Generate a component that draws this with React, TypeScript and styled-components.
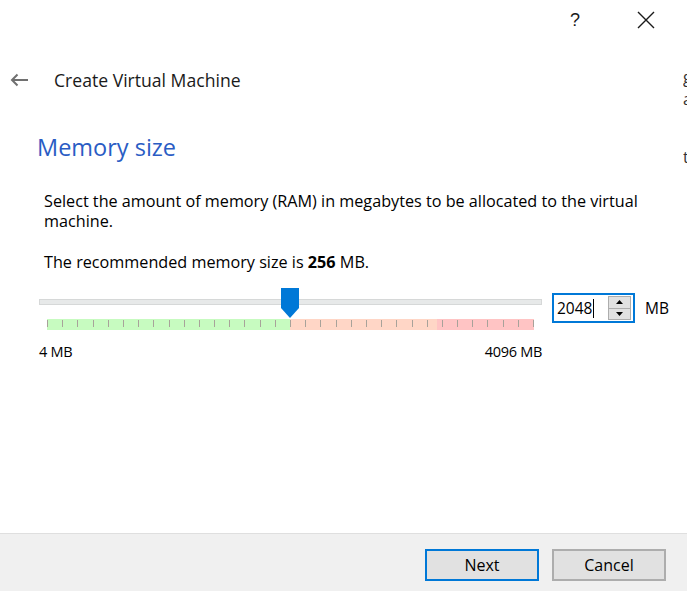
import React from "react";
import styled, { createGlobalStyle } from "styled-components";

const GlobalStyle = createGlobalStyle`
  html, body {
    margin: 0;
    padding: 0;
    background: #ffffff;
  }
  body {
    font-family: "Open Sans", "Noto Sans", "Liberation Sans", sans-serif;
    color: #000;
  }
`;

const TICKS = 33;
const MIN_MB = 4;
const MAX_MB = 4096;
const VALUE_MB = 2048;

function Dialog() {
  const pct = (VALUE_MB - MIN_MB) / (MAX_MB - MIN_MB);

  return (
    <Window>
      <TitleBar>
        <TitleButton>?</TitleButton>
        <TitleButton>
          <svg width="18" height="18" viewBox="0 0 18 18">
            <path d="M1 1 L17 17 M17 1 L1 17" stroke="#1a1a1a" strokeWidth="1.4" fill="none" />
          </svg>
        </TitleButton>
      </TitleBar>

      <Header>
        <BackArrow>
          <svg width="19" height="14" viewBox="0 0 19 14">
            <path d="M18 7 H2 M7.5 1.5 L2 7 L7.5 12.5" stroke="#707070" strokeWidth="2" fill="none" />
          </svg>
        </BackArrow>
        <HeaderTitle>Create Virtual Machine</HeaderTitle>
      </Header>

      <Content>
        <PageTitle>Memory size</PageTitle>
        <Body>
          <Paragraph>
            Select the amount of memory (RAM) in megabytes to be allocated to the virtual
            machine.
          </Paragraph>
          <Paragraph>
            The recommended memory size is <b>256</b> MB.
          </Paragraph>

          <SliderRow>
            <SliderColumn>
              <TrackArea>
                <Track />
                <Thumb style={{ left: `calc(${pct * 100}% - 9px)` }}>
                  <svg width="18" height="30" viewBox="0 0 18 30">
                    <polygon points="0,0 18,0 18,20 9,30 0,20" fill="#0078d7" />
                  </svg>
                </Thumb>
              </TrackArea>
              <TickBar>
                {Array.from({ length: TICKS }).map((_, i) => (
                  <Tick key={i} />
                ))}
              </TickBar>
              <Limits>
                <span>4 MB</span>
                <span>4096 MB</span>
              </Limits>
            </SliderColumn>

            <SpinBox>
              <SpinValue>
                2048<Caret />
              </SpinValue>
              <SpinButtons>
                <SpinButton>
                  <svg width="7" height="4" viewBox="0 0 7 4">
                    <polygon points="0,4 7,4 3.5,0" fill="#000" />
                  </svg>
                </SpinButton>
                <SpinButton>
                  <svg width="7" height="4" viewBox="0 0 7 4">
                    <polygon points="0,0 7,0 3.5,4" fill="#000" />
                  </svg>
                </SpinButton>
              </SpinButtons>
            </SpinBox>
            <Unit>MB</Unit>
          </SliderRow>
        </Body>
      </Content>

      <Footer>
        <Button $primary>Next</Button>
        <Button>Cancel</Button>
      </Footer>

      <Peek>
        <PeekChar $top={66}>g</PeekChar>
        <PeekChar $top={88}>a</PeekChar>
        <PeekChar $top={146}>t</PeekChar>
      </Peek>
    </Window>
  );
}

const Window = styled.div`
  position: relative;
  width: 687px;
  height: 591px;
  display: flex;
  flex-direction: column;
  background: #fff;
  overflow: hidden;
`;

const TitleBar = styled.div`
  height: 40px;
  display: flex;
  justify-content: flex-end;
  align-items: center;
  padding-right: 32px;
  gap: 53px;
`;

const TitleButton = styled.div`
  width: 18px;
  height: 18px;
  display: flex;
  align-items: center;
  justify-content: center;
  font-size: 18px;
  color: #1a1a1a;
  font-family: "Liberation Sans", sans-serif;
`;

const Header = styled.div`
  height: 40px;
  display: flex;
  align-items: center;
  padding-left: 10px;
  margin-top: 20px;
`;

const BackArrow = styled.div`
  width: 19px;
  display: flex;
  align-items: center;
`;

const HeaderTitle = styled.div`
  margin-left: 25px;
  font-size: 17.6px;
  color: #1a1a1a;
`;

const Content = styled.div`
  flex: 1;
  padding-left: 37px;
  padding-top: 32px;
`;

const PageTitle = styled.div`
  font-size: 23.5px;
  line-height: 30px;
  color: #2a5cc4;
`;

const Body = styled.div`
  padding-left: 7px;
  margin-top: 29px;
`;

const Paragraph = styled.p`
  margin: 0 0 21px 0;
  width: 625px;
  font-size: 16.2px;
  line-height: 20px;
  b {
    font-weight: 700;
  }
`;

const SliderRow = styled.div`
  display: flex;
  align-items: flex-start;
  margin-left: -5px;
  margin-top: -5px;
`;

const SliderColumn = styled.div`
  width: 503px;
  display: flex;
  flex-direction: column;
`;

const TrackArea = styled.div`
  position: relative;
  height: 30px;
  display: flex;
  align-items: flex-start;
`;

const Track = styled.div`
  margin-top: 11px;
  width: 100%;
  height: 6px;
  box-sizing: border-box;
  background: #e7e9e9;
  border: 1px solid #d6d8d8;
`;

const Thumb = styled.div`
  position: absolute;
  top: 0;
  width: 18px;
  height: 30px;
`;

const TickBar = styled.div`
  margin: 1px 8px 0;
  height: 11px;
  display: flex;
  justify-content: space-between;
  align-items: flex-start;
  background: linear-gradient(
    to right,
    #c7fbc0 0%,
    #c7fbc0 50%,
    #ffd6c6 50%,
    #ffd6c6 80%,
    #ffc4c4 80%,
    #ffc4c4 100%
  );
`;

const Tick = styled.span`
  width: 1px;
  height: 7px;
  margin-top: 1px;
  background: #a8a29a;
`;

const Limits = styled.div`
  display: flex;
  justify-content: space-between;
  margin-top: 13px;
  font-size: 14.5px;
  line-height: 18px;
  letter-spacing: -0.3px;
`;

const SpinBox = styled.div`
  margin-left: 10px;
  margin-top: 5px;
  width: 83px;
  height: 30px;
  box-sizing: border-box;
  border: 2px solid #0078d7;
  display: flex;
  align-items: center;
  padding: 0 2px 0 3px;
`;

const SpinValue = styled.div`
  flex: 1;
  display: flex;
  align-items: center;
  font-size: 15.5px;
`;

const Caret = styled.span`
  display: inline-block;
  width: 1px;
  height: 19px;
  background: #000;
  margin-left: 1px;
`;

const SpinButtons = styled.div`
  width: 23px;
  height: 24px;
  display: flex;
  flex-direction: column;
  border: 1px solid #adadad;
  box-sizing: border-box;
`;

const SpinButton = styled.div`
  flex: 1;
  display: flex;
  align-items: center;
  justify-content: center;
  background: #e1e1e1;
  & + & {
    border-top: 1px solid #adadad;
  }
`;

const Unit = styled.div`
  margin-left: 10px;
  margin-top: 10px;
  font-size: 15.5px;
  line-height: 20px;
`;

const Footer = styled.div`
  height: 58px;
  border-top: 1px solid #dfdfdf;
  background: #f0f0f0;
  display: flex;
  justify-content: flex-end;
  align-items: flex-start;
  gap: 13px;
  padding: 15px 21px 0 0;
  box-sizing: border-box;
`;

const Button = styled.button<{ $primary?: boolean }>`
  width: 114px;
  height: 32px;
  box-sizing: border-box;
  background: #e1e1e1;
  border: 2px solid ${(p) => (p.$primary ? "#0078d7" : "#adadad")};
  font-family: inherit;
  font-size: 16px;
  color: #000;
  padding: 0;
`;

/* edge of a window lying behind, showing a sliver of its text */
const Peek = styled.div`
  position: absolute;
  top: 0;
  right: 0;
  width: 4px;
  height: 200px;
  overflow: hidden;
`;

const PeekChar = styled.span<{ $top: number }>`
  position: absolute;
  left: 0;
  top: ${(p) => p.$top}px;
  font-size: 16px;
  color: #333;
`;

export default function App() {
  return (
    <>
      <GlobalStyle />
      <Dialog />
    </>
  );
}
